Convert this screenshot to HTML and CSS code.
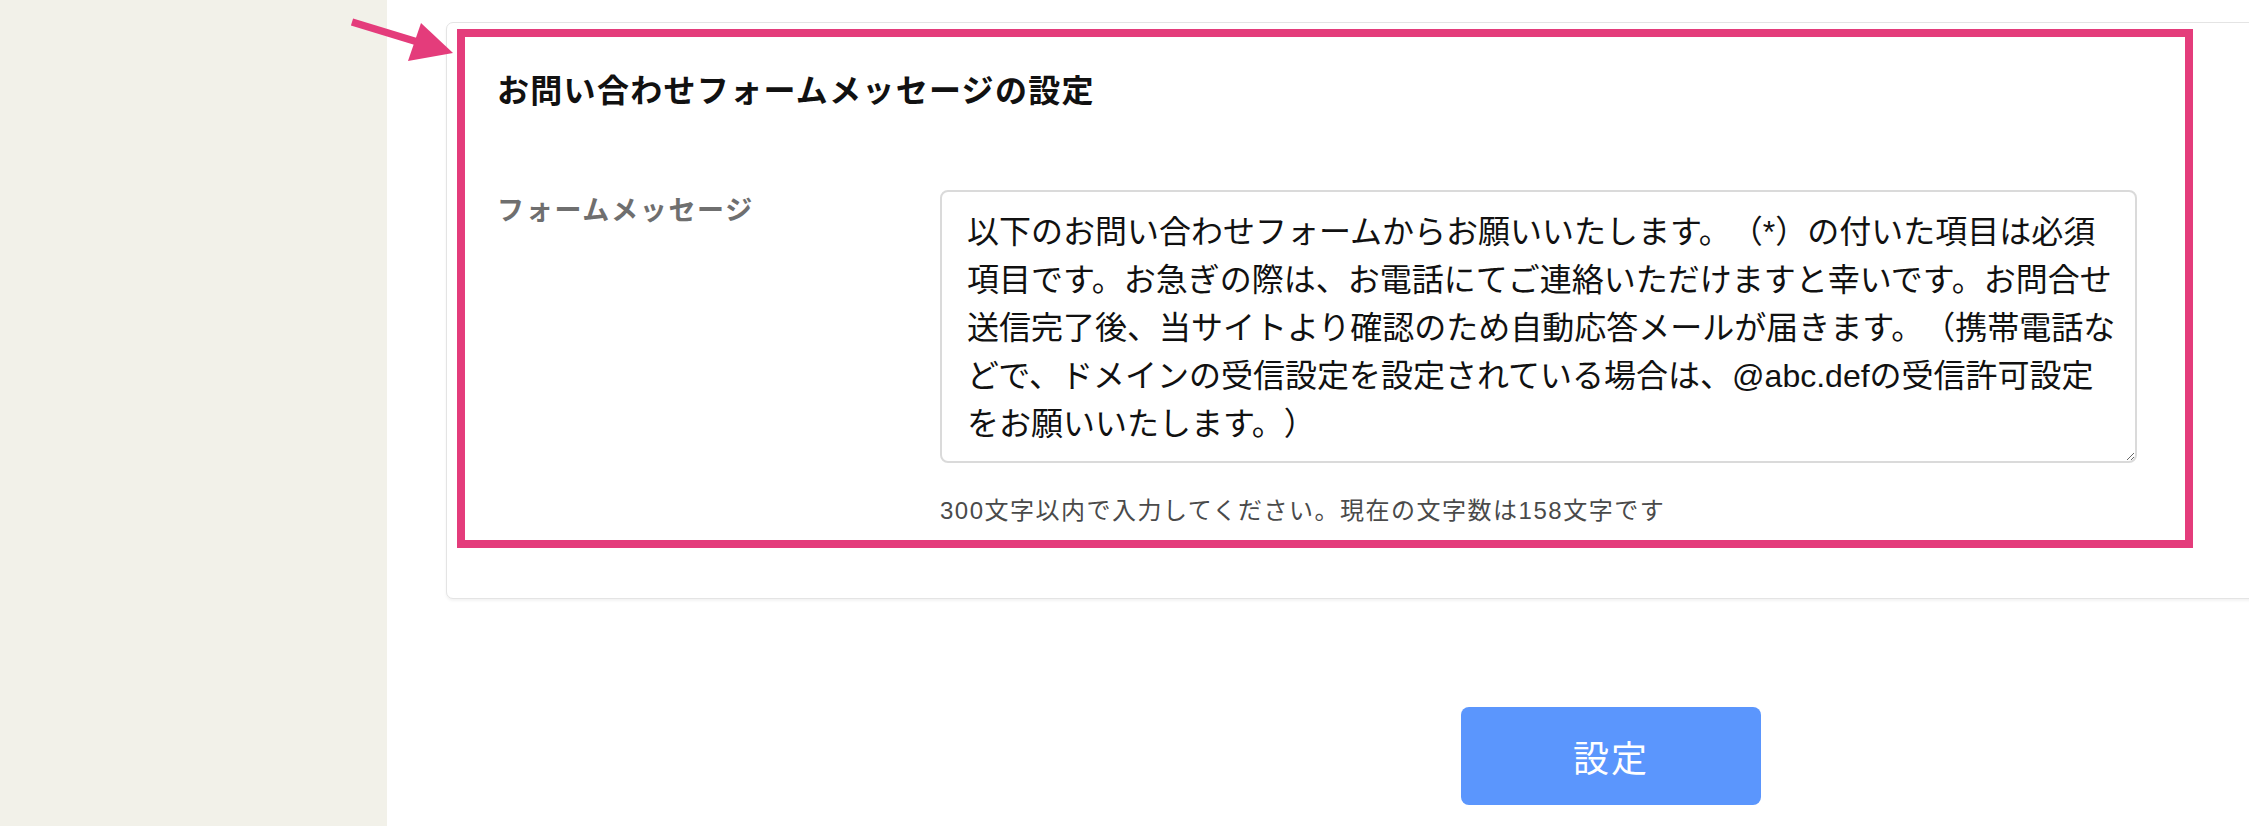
FILE: index.html
```html
<!DOCTYPE html>
<html lang="ja">
<head>
<meta charset="utf-8">
<title>お問い合わせフォームメッセージの設定</title>
<link rel="stylesheet" href="styles.css">
</head>
<body>
<div class="app">
  <aside class="sidebar"></aside>
  <main class="main">
    <div class="container">
      <section class="card">
        <div class="highlight">
          <h2 class="card-title">お問い合わせフォームメッセージの設定</h2>
          <div class="form-row">
            <label class="form-label" for="msg">フォームメッセージ</label>
            <div class="form-field">
              <textarea id="msg" class="textarea">以下のお問い合わせフォームからお願いいたします。（*）の付いた項目は必須項目です。お急ぎの際は、お電話にてご連絡いただけますと幸いです。お問合せ送信完了後、当サイトより確認のため自動応答メールが届きます。（携帯電話などで、ドメインの受信設定を設定されている場合は、@abc.defの受信許可設定をお願いいたします。）</textarea>
              <p class="hint">300文字以内で入力してください。現在の文字数は158文字です</p>
            </div>
          </div>
        </div>
      </section>
      <div class="actions">
        <button class="btn-primary" type="button">設定</button>
      </div>
    </div>
  </main>
</div>
<svg class="arrow" width="470" height="70" viewBox="0 0 470 70" aria-hidden="true">
  <line x1="352" y1="22" x2="416" y2="41.5" stroke="#e43c7b" stroke-width="7.5"/>
  <polygon points="421,23 408,61 453,53" fill="#e43c7b"/>
</svg>
</body>
</html>
```

FILE: styles.css
```css
html, body {
  margin: 0;
  padding: 0;
  height: 100%;
  overflow: hidden;
  background: #ffffff;
}

body {
  font-family: "Liberation Sans", "Noto Sans CJK JP", sans-serif;
  color: #111111;
}

.app {
  display: flex;
  height: 826px;
}

.sidebar {
  flex: 0 0 387px;
  background: #f2f1e9;
}

.main {
  flex: 1 1 auto;
  overflow: hidden;
  padding: 22px 0 0 59px;
}

.container {
  width: 2330px;
}

.card {
  box-sizing: border-box;
  width: 2330px;
  border: 1px solid #e4e4e4;
  border-radius: 7px;
  box-shadow: 0 2px 3px rgba(0, 0, 0, 0.05);
  background: #ffffff;
  padding: 6px 0 50px 10px;
}

.highlight {
  box-sizing: border-box;
  width: 1736px;
  border: 8px solid #e43c7b;
  padding: 30px 0 11px 32px;
}

.card-title {
  margin: 0;
  font-size: 32px;
  line-height: 48px;
  font-weight: 700;
  letter-spacing: 1.3px;
  color: #111111;
}

.form-row {
  display: flex;
  margin-top: 75px;
}

.form-label {
  flex: 0 0 443px;
  font-size: 27px;
  line-height: 42px;
  font-weight: 700;
  letter-spacing: 1.7px;
  color: #6f6f6f;
}

.form-field {
  display: flex;
  flex-direction: column;
}

.textarea {
  box-sizing: border-box;
  width: 1197px;
  height: 273px;
  margin: 0;
  padding: 16px 10px 13px 25px;
  border: 2px solid #dadada;
  border-radius: 8px;
  font-family: "Liberation Sans", "Noto Sans CJK JP", sans-serif;
  font-size: 32px;
  line-height: 48px;
  color: #111111;
  overflow: hidden;
  text-spacing-trim: space-all;
  outline: none;
}

.hint {
  margin: 30px 0 0 0;
  font-size: 24px;
  line-height: 36px;
  letter-spacing: 1.5px;
  color: #4a4a4a;
}

.actions {
  display: flex;
  justify-content: center;
  margin-top: 108px;
}

.btn-primary {
  width: 300px;
  height: 98px;
  border: none;
  border-radius: 8px;
  background: #5b96fd;
  color: #ffffff;
  font-family: "Liberation Sans", "Noto Sans CJK JP", sans-serif;
  font-size: 36px;
  font-weight: 400;
  letter-spacing: 2px;
  cursor: pointer;
}

.arrow {
  position: absolute;
  left: 0;
  top: 0;
}
```
